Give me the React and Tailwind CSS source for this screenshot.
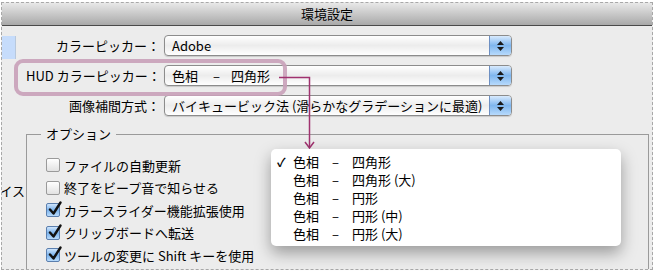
import React from 'react'

const font = { fontFamily: '"Noto Sans CJK JP", "Liberation Sans", sans-serif' }

function Hue({ shape, first, gap }) {
  return (
    <span className="flex items-center">
      <span className={first}>色相</span>
      <span className={gap}>–</span>
      <span>{shape}</span>
    </span>
  )
}

function Select({ value }) {
  return (
    <div className="flex h-[21px] w-[348px] items-stretch rounded-[4px] border border-[#8c8c8c] bg-gradient-to-b from-white via-[#ececec] to-white shadow-[0_1px_1px_rgba(0,0,0,0.15)]">
      <div className="flex flex-1 items-center pl-[7px] text-[13px] leading-none text-black">{value}</div>
      <div className="flex w-[22px] flex-col items-center justify-center gap-[2px] rounded-r-[3px] border-l border-[#6d8fc2] bg-gradient-to-b from-[#d8eafd] via-[#7fb6ee] to-[#b7dafc]">
        <svg width="7" height="4" viewBox="0 0 7 4"><path d="M3.5 0L7 4H0z" fill="#1a1a1a" /></svg>
        <svg width="7" height="4" viewBox="0 0 7 4"><path d="M0 0h7L3.5 4z" fill="#1a1a1a" /></svg>
      </div>
    </div>
  )
}

function Check({ checked, label }) {
  return (
    <div className="flex h-[22.5px] items-center gap-[4px] text-[13px] text-black">
      {checked ? (
        <div className="relative h-[14px] w-[14px] rounded-[2px] border border-[#5b7fae] bg-gradient-to-b from-[#cfe5fc] via-[#79b2ec] to-[#b8dbfc]">
          <svg className="absolute left-[1px] top-[-3px]" width="14" height="15" viewBox="0 0 14 15">
            <path d="M2 8.5L5.5 12.5L12.5 1.5" stroke="#111" strokeWidth="2.4" fill="none" strokeLinecap="round" strokeLinejoin="round" />
          </svg>
        </div>
      ) : (
        <div className="h-[14px] w-[14px] rounded-[2px] border border-[#9a9a9a] bg-gradient-to-b from-white to-[#e2e2e2]" />
      )}
      <span>{label}</span>
    </div>
  )
}

export default function App() {
  const rows = [
    { label: 'カラーピッカー：', value: 'Adobe' },
    { label: 'HUD カラーピッカー：', value: <Hue shape="四角形" first="w-[41px] shrink-0" gap="w-[18px] shrink-0" /> },
    { label: '画像補間方式：', value: 'バイキュービック法 (滑らかなグラデーションに最適)' },
  ]

  const options = [
    { label: 'ファイルの自動更新', checked: false },
    { label: '終了をビープ音で知らせる', checked: false },
    { label: 'カラースライダー機能拡張使用', checked: true },
    { label: 'クリップボードへ転送', checked: true },
    { label: 'ツールの変更に Shift キーを使用', checked: true },
    { label: 'ツールの変更時にカーソルを表示', checked: true },
  ]

  const menu = ['四角形', '四角形 (大)', '円形', '円形 (中)', '円形 (大)']

  return (
    <div className="relative h-[271px] w-[655px] overflow-hidden bg-white" style={font}>
      <div className="absolute left-[1px] top-[2px] flex h-[268px] w-[652px] flex-col overflow-hidden border border-dashed border-[#a8a8a8] bg-[#ececec]">
        {/* Title bar */}
        <div className="flex h-[23px] shrink-0 items-center justify-center border-b border-[#4a4a4a] bg-gradient-to-b from-[#e8e8e8] to-[#a9a9a9] text-[13px] text-black">
          環境設定
        </div>

        <div className="flex flex-1">
          {/* Sidebar */}
          <div className="flex w-[23px] shrink-0 flex-col">
            <div className="mt-[10px] h-[23px] w-[14px] border-r border-[#b8c8dc] bg-[#c6dcfb]" />
            <div className="mt-[125px] flex justify-end overflow-hidden whitespace-nowrap text-[13px] leading-none text-black">イス</div>
          </div>

          {/* Main */}
          <div className="flex flex-1 flex-col pl-[1px]">
            <div className="mt-[9px] flex flex-col gap-[9px]">
              {rows.map((r) => (
                <div key={r.label} className="flex items-center">
                  <div className="w-[134px] whitespace-nowrap text-right text-[13px] text-black">{r.label}</div>
                  <div className="ml-[4px]">
                    <Select value={r.value} />
                  </div>
                </div>
              ))}
            </div>

            {/* Options group */}
            <div className="relative mr-[3px] mt-[18px] flex-1 border-l border-t border-r border-[#9a9a9a] pl-[19px] pt-[19px]">
              <div className="absolute left-[14px] top-[-11px] bg-[#ececec] px-[5px] text-[13px] text-black">オプション</div>
              <div className="flex flex-col">
                {options.map((o) => (
                  <Check key={o.label} checked={o.checked} label={o.label} />
                ))}
              </div>
            </div>
          </div>
        </div>
      </div>

      {/* Highlight around HUD row */}
      <div className="absolute left-[14px] top-[59px] h-[37px] w-[273px] rounded-[9px] border-[4px] border-[#c9a1b9]/90" />

      {/* Connector arrow */}
      <svg className="absolute left-0 top-0" width="655" height="271" viewBox="0 0 655 271">
        <path d="M279 77.5H309.5V147" stroke="#a0326f" strokeWidth="1.5" fill="none" />
        <path d="M305 142L309.5 148L314 142" stroke="#a0326f" strokeWidth="1.5" fill="none" />
      </svg>

      {/* Popup menu */}
      <div className="absolute left-[271px] top-[149px] flex h-[97px] w-[350px] flex-col rounded-[5px] bg-white pt-[4px] shadow-[0_7px_16px_rgba(0,0,0,0.35)]">
        {menu.map((m, i) => (
          <div key={m} className="flex h-[18px] items-center text-[13px] text-black">
            <span className="w-[22px] shrink-0 pl-[6px] text-[12px] font-bold">{i === 0 ? '✓' : ''}</span>
            <Hue shape={m} first="w-[39px] shrink-0" gap="w-[20px] shrink-0" />
          </div>
        ))}
      </div>
    </div>
  )
}
